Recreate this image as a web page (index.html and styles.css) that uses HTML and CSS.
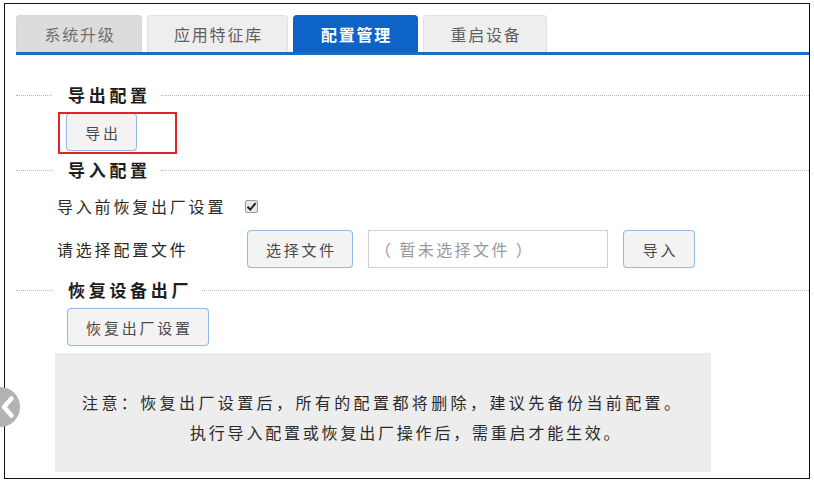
FILE: index.html
```html
<!DOCTYPE html>
<html>
<head>
    <title>配置管理</title>
    <meta charset="UTF-8">
    <link rel="stylesheet" href="styles.css">
</head>
<body>
    <div class="frame">
        <!--tabs-->
        <div class="tabs">
            <div class="tab tab-dim">系统升级</div>
            <div class="tab tab-wide">应用特征库</div>
            <div class="tab tab-active">配置管理</div>
            <div class="tab">重启设备</div>
        </div>

        <div class="content">
            <!--export-->
            <div class="legend"><span class="dots-l"></span><span class="legend-text">导出配置</span><span class="dots-r"></span></div>
            <div class="export-row">
                <span class="mark-wrap">
                    <button class="btn btn-export">导出</button>
                    <span class="mark"></span>
                </span>
            </div>

            <!--import-->
            <div class="legend legend-import"><span class="dots-l"></span><span class="legend-text">导入配置</span><span class="dots-r"></span></div>
            <div class="opt-row">
                <span class="label">导入前恢复出厂设置</span>
                <span class="check">
                    <svg width="11" height="11" viewBox="0 0 11 11"><path d="M1.5 5.8 L4.3 8.6 L9.6 2.2" fill="none" stroke="#222" stroke-width="2"/></svg>
                </span>
            </div>
            <div class="file-row">
                <span class="label label-file">请选择配置文件</span>
                <button class="btn btn-choose">选择文件</button>
                <div class="file-box">（ 暂未选择文件 ）</div>
                <button class="btn btn-import">导入</button>
            </div>

            <!--reset-->
            <div class="legend legend-reset"><span class="dots-l"></span><span class="legend-text">恢复设备出厂</span><span class="dots-r"></span></div>
            <div class="reset-row">
                <button class="btn btn-reset">恢复出厂设置</button>
            </div>

            <div class="note">
                <div class="note-line">注意：恢复出厂设置后，所有的配置都将删除，建议先备份当前配置。</div>
                <div class="note-line note-second">执行导入配置或恢复出厂操作后，需重启才能生效。</div>
            </div>
        </div>
    </div>

    <div class="side-arrow">
        <svg width="40" height="40" viewBox="0 0 40 40"><path d="M31.5 11.5 L24 20 L31.5 28.5" fill="none" stroke="#fff" stroke-width="4.5" stroke-linecap="round" stroke-linejoin="round"/></svg>
    </div>
</body>
</html>
```

FILE: styles.css
```css
body{
    margin:0;
    padding:0;
    background:#fff;
    font-family:"Noto Sans CJK SC", "Noto Sans", sans-serif;
    color:#333;
}
.frame{
    box-sizing:border-box;
    width:806px;
    height:476px;
    margin:3px 0 0 4px;
    border:1px solid #111;
}

/* tabs */
.tabs{
    display:flex;
    gap:5px;
    margin:11px 0 0 11px;
    border-bottom:3px solid #1a6cc7;
}
.tab{
    box-sizing:border-box;
    width:124px;
    height:37px;
    display:flex;
    align-items:center;
    justify-content:center;
    background:#eeeeee;
    border:1px solid #e0e0e0;
    border-bottom:none;
    border-radius:4px 4px 0 0;
    color:#606060;
    font-size:16px;
    letter-spacing:1.8px;
    padding-left:2px;
}
.tab-dim{
    width:126px;
    background:#dcdcdc;
    border-color:#d6d6d6;
    color:#707070;
}
.tab-wide{
    width:141px;
}
.tab-active{
    width:125px;
    background:#0d64c6;
    border-color:#0d64c6;
    color:#fff;
    font-weight:bold;
}

/* body */
.content{
    padding:30px 0 0 11px;
}
.legend{
    display:flex;
    align-items:center;
    height:20px;
}
.dots-l{
    width:36px;
    border-top:1px dotted #b8b8b8;
}
.dots-r{
    flex:1;
    border-top:1px dotted #b8b8b8;
}
.legend-text{
    padding:0 10px 0 16px;
    font-size:17px;
    font-weight:bold;
    letter-spacing:3.7px;
    color:#1e1e1e;
    line-height:20px;
}
.legend-import{
    margin-top:9px;
}
.legend-reset{
    margin-top:12px;
}

.btn{
    box-sizing:border-box;
    height:38px;
    border:1px solid #92bbe6;
    border-radius:4px;
    background:#f3f3f3;
    color:#4a4a4a;
    font-family:inherit;
    font-size:15px;
    letter-spacing:2.8px;
    padding:0 0 0 3px;
    box-shadow:0 0 1px #c4dcf4;
}

.export-row{
    margin:8px 0 0 50px;
    height:38px;
}
.mark-wrap{
    position:relative;
    display:inline-block;
}
.btn-export{
    width:71px;
    display:block;
}
.mark{
    position:absolute;
    left:-8px;
    top:-1px;
    width:119px;
    height:42px;
    box-sizing:border-box;
    border:2px solid #e0242a;
}

.opt-row{
    display:flex;
    align-items:center;
    height:20px;
    margin:16px 0 0 41px;
}
.label{
    font-size:16px;
    letter-spacing:2.8px;
    color:#2a2a2a;
}
.check{
    box-sizing:border-box;
    width:13px;
    height:13px;
    margin-left:19px;
    border:1px solid #9a9a9a;
    border-radius:2px;
    background:#e9e9e9;
    display:flex;
    align-items:center;
    justify-content:center;
}

.file-row{
    display:flex;
    align-items:center;
    gap:15px;
    margin:14px 0 0 41px;
    height:38px;
}
.label-file{
    width:175px;
}
.btn-choose{
    width:106px;
}
.file-box{
    box-sizing:border-box;
    width:240px;
    height:38px;
    border:1px solid #cfcfcf;
    display:flex;
    align-items:center;
    padding-left:6px;
    color:#999;
    font-size:16px;
    letter-spacing:2.4px;
}
.btn-import{
    width:72px;
}

.reset-row{
    margin:8px 0 0 51px;
    height:38px;
}
.btn-reset{
    width:142px;
}

.note{
    box-sizing:border-box;
    width:656px;
    height:119px;
    margin:7px 0 0 39px;
    padding-top:34px;
    background:#ededed;
}
.note-line{
    height:30px;
    line-height:30px;
    padding-left:27px;
    font-size:16px;
    letter-spacing:3.4px;
    color:#2a2a2a;
    white-space:nowrap;
}
.note-second{
    padding-left:135px;
    letter-spacing:2.8px;
}

/* side pager arrow */
.side-arrow{
    position:absolute;
    left:-20px;
    top:387px;
    width:40px;
    height:40px;
    border-radius:50%;
    background:#b3b3b3;
}
.side-arrow svg{
    display:block;
}
```
